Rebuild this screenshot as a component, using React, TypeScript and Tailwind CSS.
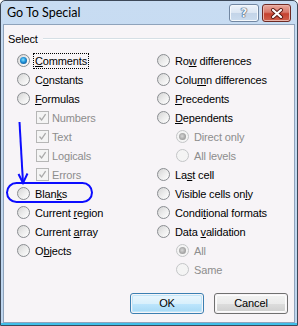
type Item = {
  label: string;
  u?: number;
  kind: 'radio' | 'check';
  indent?: boolean;
  disabled?: boolean;
  checked?: boolean;
  focus?: boolean;
};

const leftItems: Item[] = [
  { label: 'Comments', u: 0, kind: 'radio', checked: true, focus: true },
  { label: 'Constants', u: 1, kind: 'radio' },
  { label: 'Formulas', u: 0, kind: 'radio' },
  { label: 'Numbers', kind: 'check', indent: true, disabled: true, checked: true },
  { label: 'Text', kind: 'check', indent: true, disabled: true, checked: true },
  { label: 'Logicals', kind: 'check', indent: true, disabled: true, checked: true },
  { label: 'Errors', kind: 'check', indent: true, disabled: true, checked: true },
  { label: 'Blanks', u: 4, kind: 'radio' },
  { label: 'Current region', u: 8, kind: 'radio' },
  { label: 'Current array', u: 8, kind: 'radio' },
  { label: 'Objects', u: 1, kind: 'radio' },
];

const rightItems: Item[] = [
  { label: 'Row differences', u: 2, kind: 'radio' },
  { label: 'Column differences', u: 4, kind: 'radio' },
  { label: 'Precedents', u: 0, kind: 'radio' },
  { label: 'Dependents', u: 0, kind: 'radio' },
  { label: 'Direct only', kind: 'radio', indent: true, disabled: true, checked: true },
  { label: 'All levels', kind: 'radio', indent: true, disabled: true },
  { label: 'Last cell', u: 2, kind: 'radio' },
  { label: 'Visible cells only', u: 16, kind: 'radio' },
  { label: 'Conditional formats', u: 5, kind: 'radio' },
  { label: 'Data validation', u: 5, kind: 'radio' },
  { label: 'All', kind: 'radio', indent: true, disabled: true, checked: true },
  { label: 'Same', kind: 'radio', indent: true, disabled: true },
];

function Radio({ checked, disabled }: { checked?: boolean; disabled?: boolean }) {
  return (
    <span
      className={`w-[13px] h-[13px] shrink-0 rounded-full border flex items-center justify-center ${
        disabled
          ? 'border-[#c4c6c8] bg-[#f4f4f4]'
          : 'border-[#8a8d91] bg-[linear-gradient(135deg,#d4d4d4_0%,#ececec_50%,#ffffff_100%)]'
      }`}
    >
      {checked && (
        <span
          className={`w-[7px] h-[7px] rounded-full ${
            disabled
              ? 'bg-[radial-gradient(circle_at_45%_45%,#d8d8d8_0%,#a8a8a8_55%,#8c8c8c_100%)]'
              : 'bg-[radial-gradient(circle_at_45%_40%,#7fe0ff_0%,#1f8fd6_45%,#0a3d78_100%)]'
          }`}
        />
      )}
    </span>
  );
}

function Check({ disabled }: { disabled?: boolean }) {
  return (
    <span
      className={`w-[13px] h-[13px] shrink-0 border flex items-center justify-center ${
        disabled ? 'border-[#b6b6b6] bg-[#f4f4f4]' : 'border-[#8a8d91] bg-white'
      }`}
    >
      <svg width="9" height="9" viewBox="0 0 9 9">
        <path d="M1.5 4.5 L3.6 7 L7.6 1.2" fill="none" stroke="#a9a9a9" strokeWidth="1.3" />
      </svg>
    </span>
  );
}

function Label({ item }: { item: Item }) {
  const { label, u } = item;
  if (u === undefined) return <>{label}</>;
  return (
    <>
      {label.slice(0, u)}
      <span className="underline underline-offset-[1px]">{label[u]}</span>
      {label.slice(u + 1)}
    </>
  );
}

function Row({ item }: { item: Item }) {
  return (
    <div className={`h-[19px] flex items-center ${item.indent ? 'pl-[19px]' : ''}`}>
      {item.kind === 'radio' ? (
        <Radio checked={item.checked} disabled={item.disabled} />
      ) : (
        <Check disabled={item.disabled} />
      )}
      <span
        className={`${item.kind === 'check' ? 'ml-[1px]' : 'ml-[3px]'} px-[1px] leading-[14px] border whitespace-nowrap ${
          item.focus ? 'border-dotted border-black' : 'border-transparent'
        } ${item.disabled ? 'text-[#8d8d8d]' : 'text-black'}`}
      >
        <Label item={item} />
      </span>
    </div>
  );
}

function DialogButton({ label, primary }: { label: string; primary?: boolean }) {
  return (
    <div
      className={`w-[74px] h-[21px] rounded-[3px] border ${
        primary ? 'border-[#3c7fb1]' : 'border-[#707070]'
      } p-px`}
    >
      <div
        className={`h-full rounded-[2px] flex items-center justify-center text-black ${
          primary
            ? 'bg-[linear-gradient(to_bottom,#eaf6fd_0%,#d9f0fc_50%,#bee6fd_51%,#a7d9f5_100%)] shadow-[inset_0_0_0_1px_#c0e6fa]'
            : 'bg-[linear-gradient(to_bottom,#f2f2f2_0%,#ebebeb_50%,#dddddd_51%,#cfcfcf_100%)] shadow-[inset_0_0_0_1px_#fcfcfc]'
        }`}
      >
        {label}
      </div>
    </div>
  );
}

export default function App() {
  return (
    <div className="w-[298px] h-[326px] bg-white overflow-hidden font-['Liberation_Sans',Arial,sans-serif] text-[11px] tracking-[-0.15px]">
      <div className="relative w-full h-full flex flex-col border border-[#3d4858] rounded-t-[5px] bg-[linear-gradient(to_bottom,#c8dcf2_0%,#bed5ee_100%)]">
        {/* title bar */}
        <div className="h-[23px] flex items-center pl-[6px] pr-[6px]">
          <span className="font-['Lato','Liberation_Sans',sans-serif] text-[12.5px] tracking-normal text-black pt-[1px]">
            Go To Special
          </span>
          <div className="ml-auto flex gap-[3px] mt-[1px]">
            <div className="w-[30px] h-[18px] rounded-[3px] border border-[#7287a2] bg-[linear-gradient(to_bottom,#eef4fb_0%,#dae5f2_50%,#c3d4e8_51%,#cbdcee_100%)] shadow-[inset_0_0_0_1px_#f4f8fc] flex items-center justify-center">
              <span className="font-['DejaVu_Sans',sans-serif] font-bold text-[12px] leading-none text-[#eef3f9] [text-shadow:0_0_1px_#2f4462,0_0_1px_#2f4462,0_0_1px_#2f4462]">
                ?
              </span>
            </div>
            <div className="w-[29px] h-[18px] rounded-[3px] border border-[#6e2a24] bg-[linear-gradient(to_bottom,#e9a99d_0%,#d8786a_45%,#c5412f_55%,#d0614c_100%)] shadow-[inset_0_0_0_1px_#eab4aa] flex items-center justify-center">
              <svg width="14" height="11" viewBox="0 0 14 11">
                <path d="M3 2 L11 9 M11 2 L3 9" stroke="#5a1a14" strokeWidth="4" strokeLinecap="round" />
                <path d="M3 2 L11 9 M11 2 L3 9" stroke="#ffffff" strokeWidth="2.2" strokeLinecap="round" />
              </svg>
            </div>
          </div>
        </div>

        {/* content */}
        <div className="relative flex-1 mx-[2px] border border-[#8fa3bb] bg-[#f7f4f7] flex flex-col">
          <div className="mt-[7px] h-[14px] flex items-center pl-[4px] pr-[4px]">
            <span className="text-black leading-[14px]">Select</span>
            <div className="flex-1 ml-[5px] border-t border-[#d5dfe5] border-b border-b-white" />
          </div>

          <div className="mt-[5px] flex pl-[13px]">
            <div className="w-[140px] flex flex-col">
              {leftItems.map((item) => (
                <Row key={item.label} item={item} />
              ))}
            </div>
            <div className="flex flex-col">
              {rightItems.map((item, i) => (
                <Row key={item.label + i} item={item} />
              ))}
            </div>
          </div>

          <div className="mt-auto mb-[8px] flex justify-end gap-[10px] pr-[6px]">
            <DialogButton label="OK" primary />
            <DialogButton label="Cancel" />
          </div>
        </div>

        <div className="h-[2px] bg-[#3fbfe9]" />

        {/* annotation */}
        <svg
          className="absolute left-[-1px] top-[-1px] pointer-events-none"
          width="298"
          height="326"
          viewBox="0 0 298 326"
        >
          <rect x="7" y="183" width="85" height="19" rx="9.5" fill="none" stroke="#0c0cff" strokeWidth="2" />
          <path d="M19.5 122 L23 183" stroke="#0c0cff" strokeWidth="2" fill="none" />
          <path d="M18.5 174 L23 183 L27.5 173.5" stroke="#0c0cff" strokeWidth="2" fill="none" />
        </svg>
      </div>
    </div>
  );
}
